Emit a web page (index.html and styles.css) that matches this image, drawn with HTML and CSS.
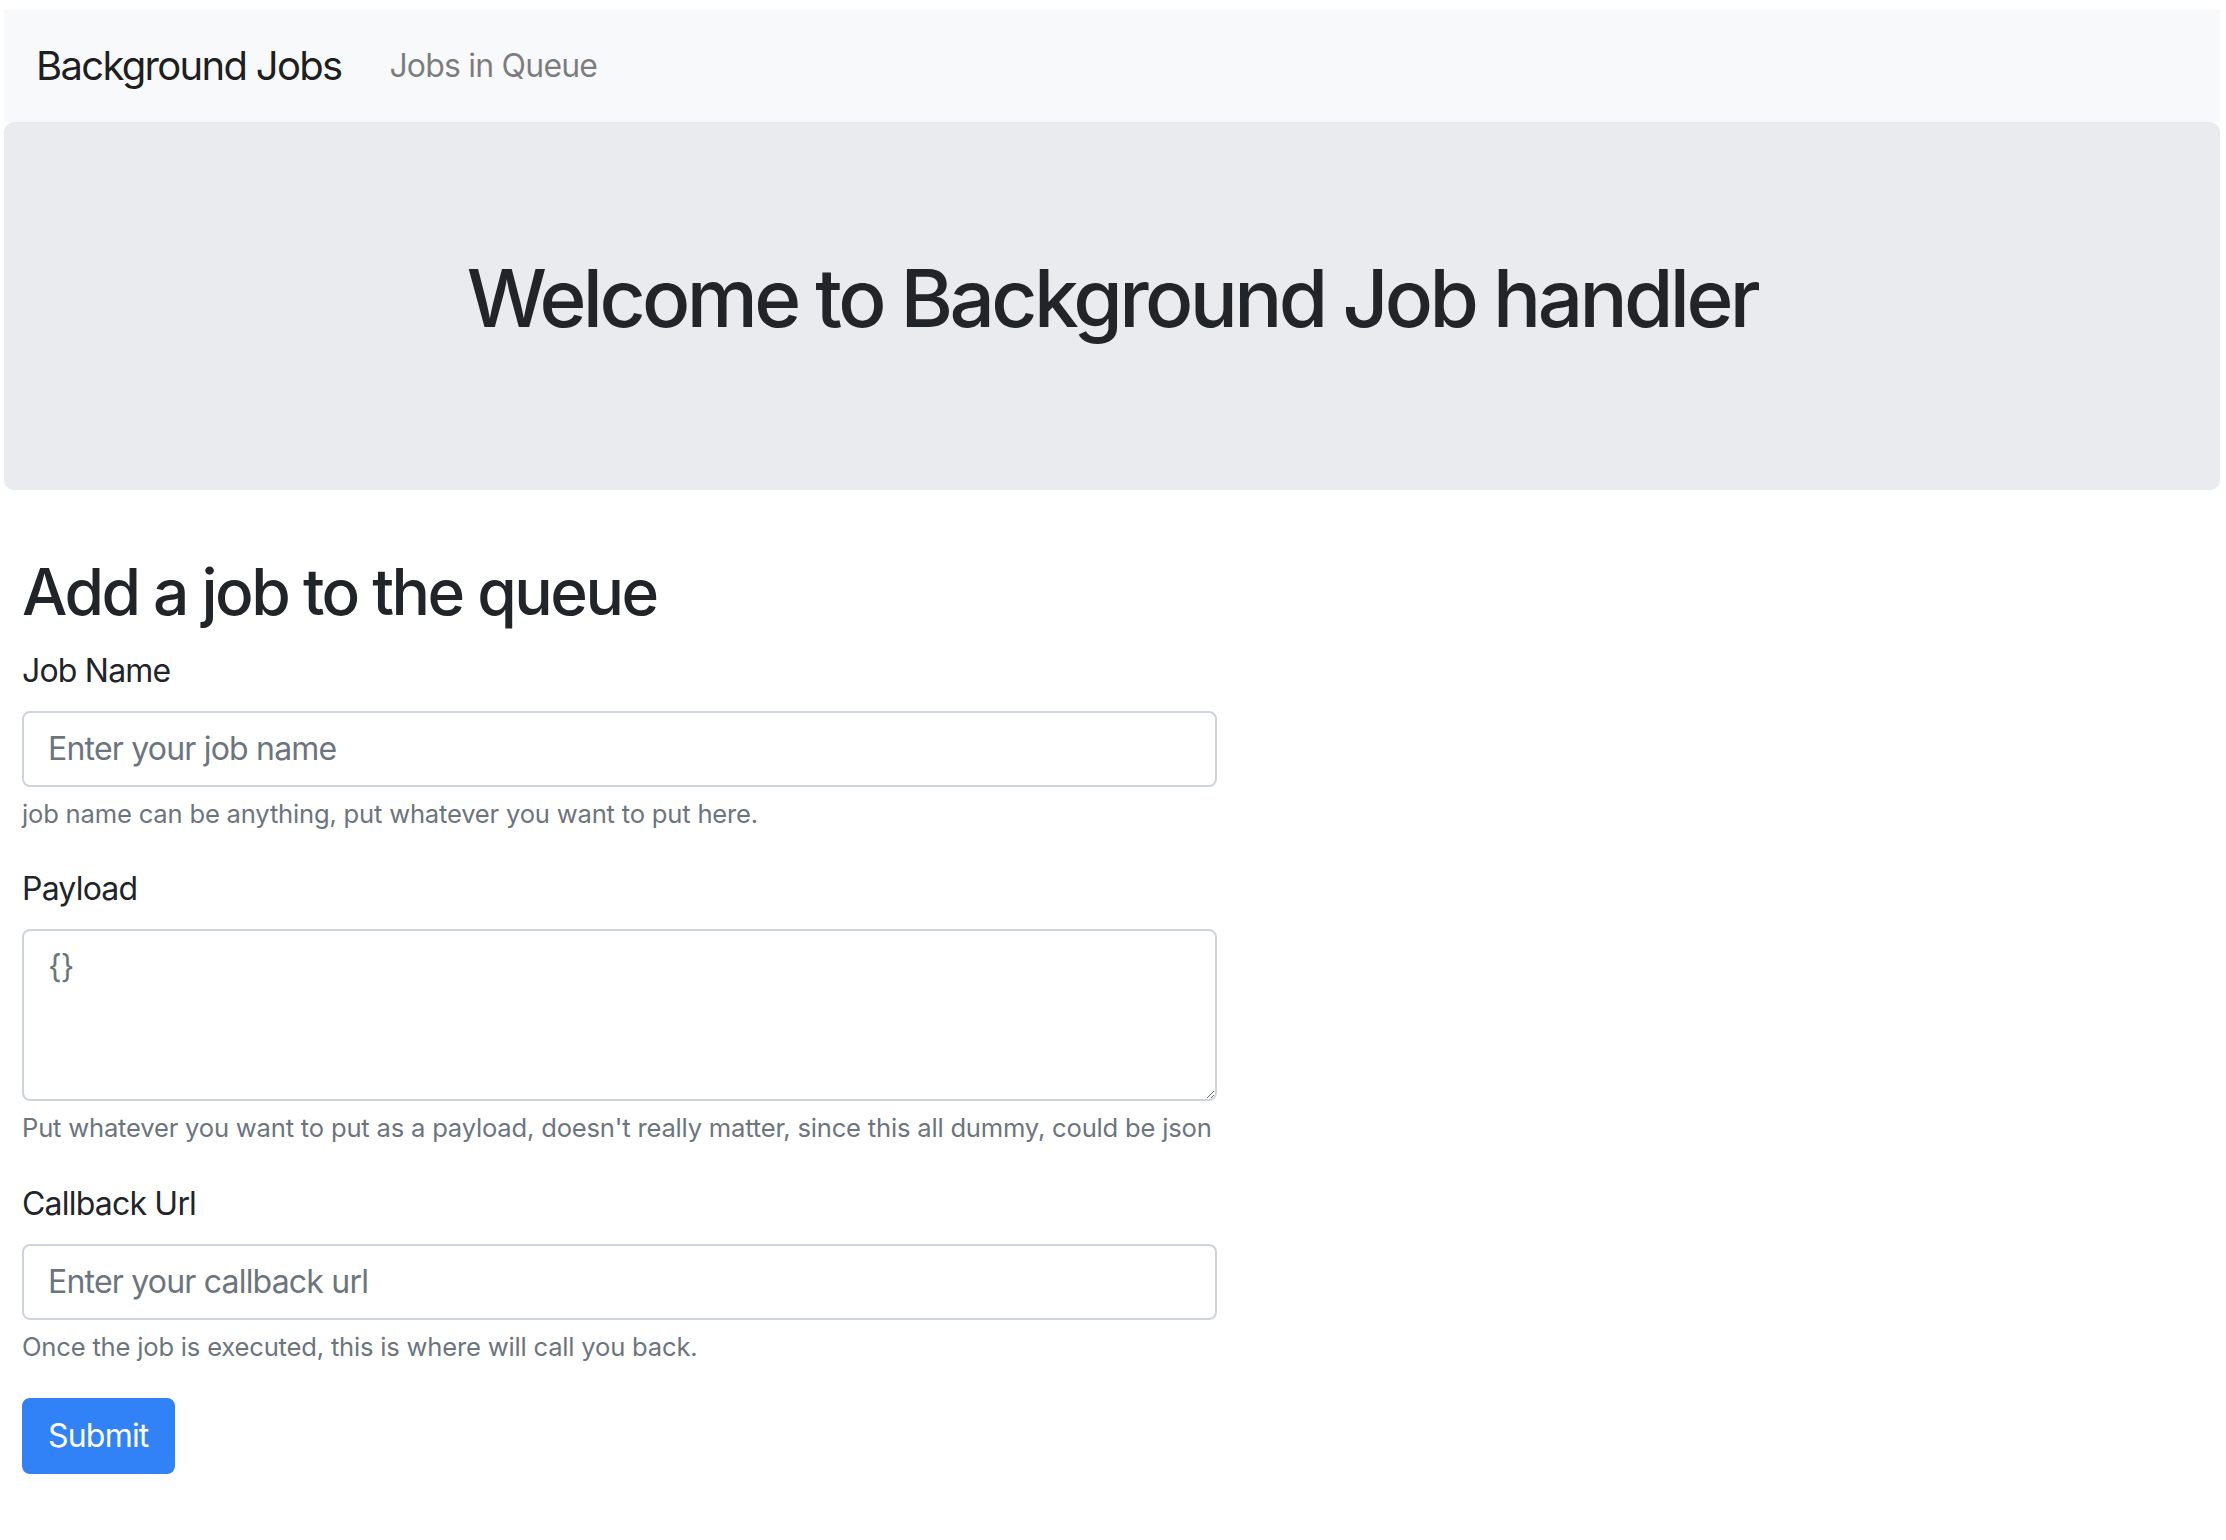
FILE: index.html
```html
<!DOCTYPE html>
<html lang="en">
<head>
<meta charset="utf-8">
<title>Background Jobs</title>
<link rel="stylesheet" href="styles.css">
</head>
<body>
<nav class="navbar">
  <a class="brand" href="#">Background Jobs</a>
  <a class="nav-link" href="#">Jobs in Queue</a>
</nav>
<header class="jumbotron">
  <h1 class="welcome">Welcome to Background Job handler</h1>
</header>
<main class="main">
  <h2 class="title">Add a job to the queue</h2>
  <form class="job-form">
    <div class="form-group">
      <label class="label" for="jobName">Job Name</label>
      <input class="form-control" id="jobName" type="text" placeholder="Enter your job name">
      <small class="help">job name can be anything, put whatever you want to put here.</small>
    </div>
    <div class="form-group">
      <label class="label" for="payload">Payload</label>
      <textarea class="form-control textarea" id="payload" rows="3" placeholder="{}"></textarea>
      <small class="help">Put whatever you want to put as a payload, doesn't really matter, since this all dummy, could be json</small>
    </div>
    <div class="form-group">
      <label class="label" for="callback">Callback Url</label>
      <input class="form-control" id="callback" type="text" placeholder="Enter your callback url">
      <small class="help">Once the job is executed, this is where will call you back.</small>
    </div>
    <button class="btn" type="submit">Submit</button>
  </form>
</main>
</body>
</html>
```
FILE: styles.css
```css
* { box-sizing: border-box; }
html, body { background: #fff; }
body {
  margin: 10px 6px 0 4px;
  font-family: Inter, "Noto Sans", "Liberation Sans", sans-serif;
  color: #212529;
  font-size: 32px;
  line-height: 48px;
  letter-spacing: -0.8px;
}
.navbar {
  display: flex;
  align-items: center;
  padding: 16px 32px;
  background: #f8f9fa;
}
.brand {
  font-size: 40px;
  line-height: 60px;
  padding: 10px 0;
  margin-right: 32px;
  color: rgba(0,0,0,.9);
  text-decoration: none;
  letter-spacing: -1.7px;
}
.nav-link {
  padding: 16px;
  font-size: 32px;
  line-height: 48px;
  color: rgba(0,0,0,.5);
  text-decoration: none;
}
.jumbotron {
  padding: 128px 64px;
  margin-bottom: 64px;
  background: #eaebef;
  border-radius: 10px;
}
.welcome {
  margin: 0 0 16px;
  font-size: 80px;
  font-weight: 500;
  line-height: 96px;
  text-align: center;
  letter-spacing: -3.6px;
}
.main { padding: 0 18px; }
.title {
  margin: 0 0 16px;
  font-size: 64px;
  font-weight: 500;
  line-height: 76.8px;
  letter-spacing: -2.5px;
}
.job-form { width: 1195px; }
.form-group { margin-bottom: 32px; }
.label {
  display: block;
  margin-bottom: 16px;
  font-size: 32px;
  line-height: 48px;
}
.form-control {
  display: block;
  width: 100%;
  height: 76px;
  padding: 12px 24px;
  font-family: inherit;
  font-size: 32px;
  line-height: 48px;
  letter-spacing: -0.8px;
  color: #495057;
  background: #fff;
  border: 2px solid #ced4da;
  border-radius: 8px;
  margin: 0;
}
.form-control::placeholder { color: #6c757d; opacity: 1; }
.textarea { height: 172px; resize: vertical; }
.help {
  display: block;
  margin-top: 8px;
  font-size: 25.6px;
  line-height: 38.4px;
  letter-spacing: -0.2px;
  white-space: nowrap;
  color: #6c757d;
}
.btn {
  display: inline-block;
  padding: 12px 24px;
  font-family: inherit;
  font-size: 32px;
  line-height: 48px;
  letter-spacing: -0.8px;
  color: #fff;
  background: #3182f6;
  border: 2px solid #3182f6;
  border-radius: 8px;
}
```
